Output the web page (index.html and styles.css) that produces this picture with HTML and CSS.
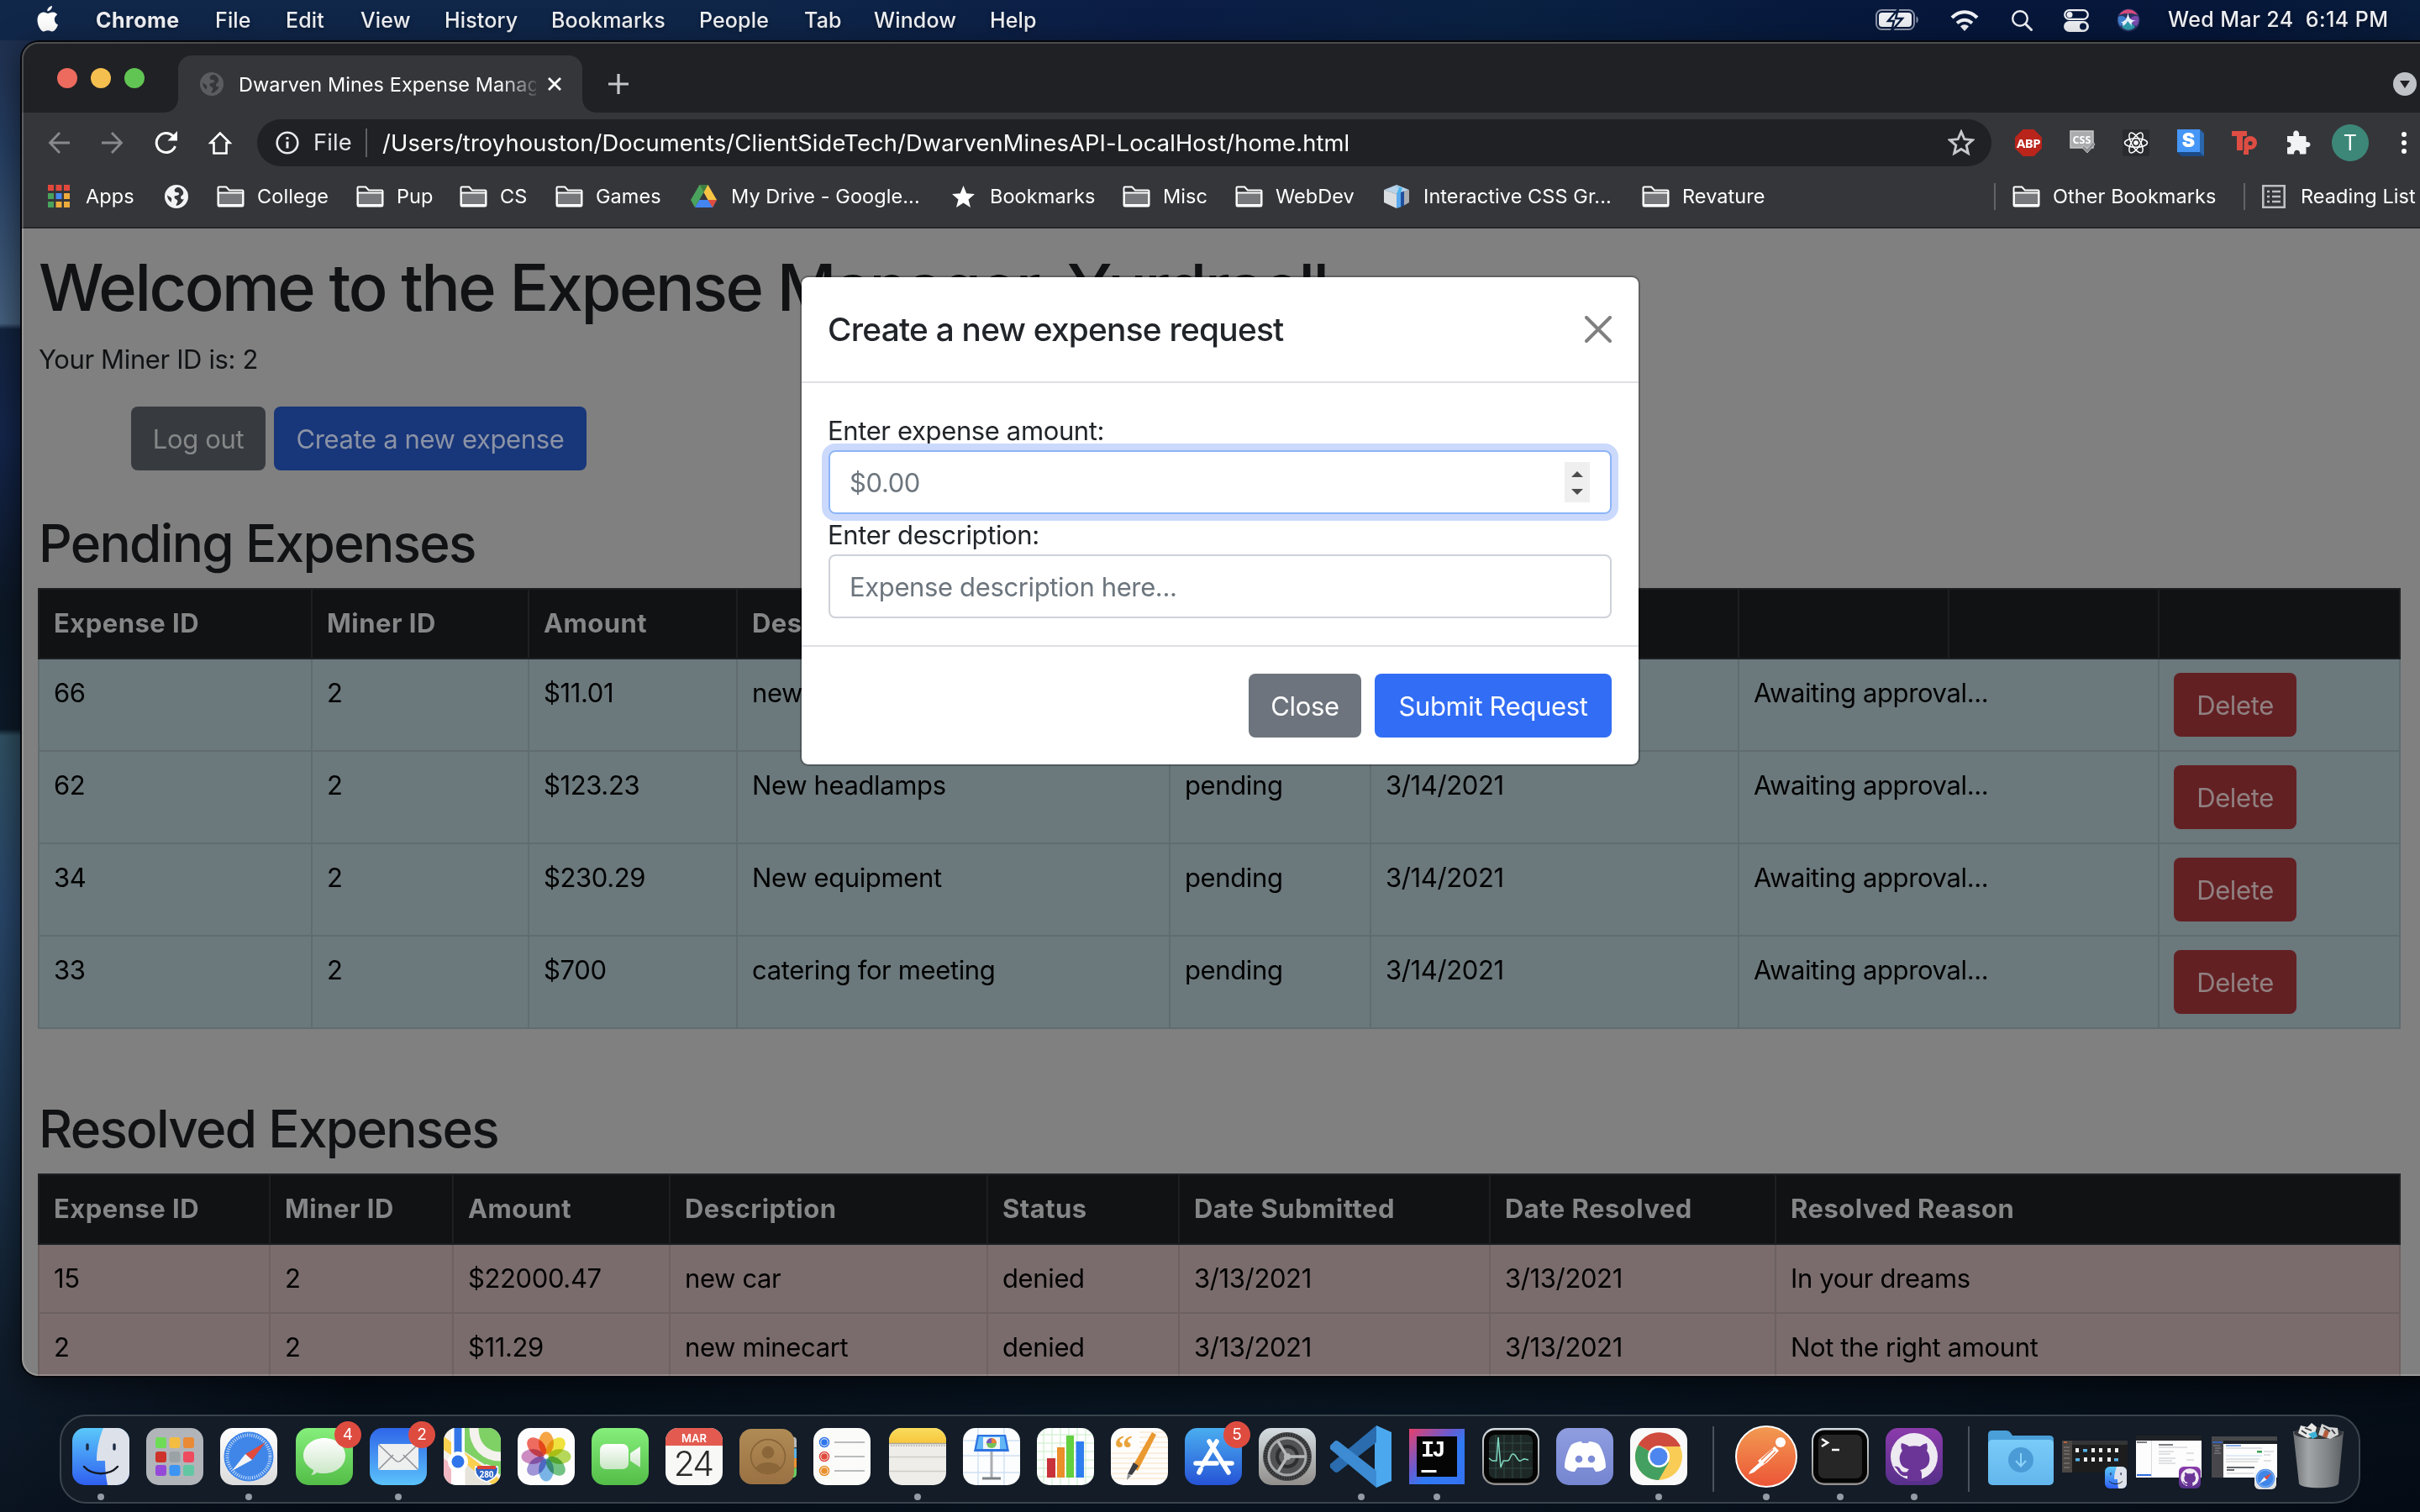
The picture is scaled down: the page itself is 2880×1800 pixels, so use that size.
FILE: index.html
```html
<!DOCTYPE html>
<html lang="en">
<head>
<meta charset="utf-8">
<title>Dwarven Mines Expense Manager</title>
<link rel="stylesheet" href="styles.css">
</head>
<body>
<svg class="defs" aria-hidden="true">
  <defs>
    <linearGradient id="gBlue" x1="0" y1="0" x2="0" y2="1"><stop offset="0" stop-color="#5ac8fa"/><stop offset="1" stop-color="#2f5ff0"/></linearGradient>
    <linearGradient id="gMail" x1="0" y1="0" x2="0" y2="1"><stop offset="0" stop-color="#2f66e9"/><stop offset="1" stop-color="#5bc2fb"/></linearGradient>
    <linearGradient id="gStore" x1="0" y1="0" x2="0" y2="1"><stop offset="0" stop-color="#4aaef0"/><stop offset="1" stop-color="#2653d6"/></linearGradient>
    <linearGradient id="gGreen" x1="0" y1="0" x2="0" y2="1"><stop offset="0" stop-color="#86ef7c"/><stop offset="1" stop-color="#53bd48"/></linearGradient>
    <linearGradient id="gGrey" x1="0" y1="0" x2="0" y2="1"><stop offset="0" stop-color="#d5dde2"/><stop offset="1" stop-color="#918e8b"/></linearGradient>
    <linearGradient id="gWhite" x1="0" y1="0" x2="0" y2="1"><stop offset="0" stop-color="#ffffff"/><stop offset="1" stop-color="#dcdcdc"/></linearGradient>
    <linearGradient id="gPurple" x1="0" y1="0" x2="0" y2="1"><stop offset="0" stop-color="#8b3bab"/><stop offset="1" stop-color="#56308a"/></linearGradient>
    <linearGradient id="gDisc" x1="0" y1="0" x2="0" y2="1"><stop offset="0" stop-color="#8f9de0"/><stop offset="1" stop-color="#7585d0"/></linearGradient>
    <linearGradient id="gPost" x1="0" y1="0" x2="0" y2="1"><stop offset="0" stop-color="#f29a52"/><stop offset="1" stop-color="#ec5536"/></linearGradient>
    <linearGradient id="gWood" x1="0" y1="0" x2="0" y2="1"><stop offset="0" stop-color="#b08b55"/><stop offset="1" stop-color="#9a7143"/></linearGradient>
    <linearGradient id="gIj" x1="0" y1="0" x2="1" y2="1"><stop offset="0" stop-color="#e8406a"/><stop offset=".4" stop-color="#6a5bd0"/><stop offset=".6" stop-color="#2f7af5"/><stop offset="1" stop-color="#3572f2"/></linearGradient>
    <linearGradient id="gTrash" x1="0" y1="0" x2="1" y2="0"><stop offset="0" stop-color="#6d7073"/><stop offset=".3" stop-color="#a3a6a8"/><stop offset=".7" stop-color="#808386"/><stop offset="1" stop-color="#5d6063"/></linearGradient>
    <linearGradient id="gFold" x1="0" y1="0" x2="0" y2="1"><stop offset="0" stop-color="#79cbf8"/><stop offset="1" stop-color="#62b6ec"/></linearGradient>
    <linearGradient id="gYellow" x1="0" y1="0" x2="0" y2="1"><stop offset="0" stop-color="#fadc5e"/><stop offset="1" stop-color="#f7c63c"/></linearGradient>
    <linearGradient id="gBubble" x1="0" y1="0" x2="0" y2="1"><stop offset="0" stop-color="#ffffff"/><stop offset="1" stop-color="#c9e6c5"/></linearGradient>
    <radialGradient id="gSiri"><stop offset="0" stop-color="#e8f4ff"/><stop offset=".3" stop-color="#5f8fd8"/><stop offset=".7" stop-color="#7c3d8c"/><stop offset="1" stop-color="#26365e"/></radialGradient>
    <clipPath id="tile"><rect width="68" height="68" rx="15"/></clipPath>

    <symbol id="i-folder" viewBox="0 0 33 26"><path d="M1.500 23V2.800C1.500 1.900 2 1.500 2.800 1.500h8.400l3.600 4h15.400c.9 0 1.300.5 1.300 1.300V23c0 .9-.5 1.500-1.300 1.500H2.800c-.8 0-1.300-.6-1.300-1.500z" fill="#35363a" stroke="#fff" stroke-width="2"/><path d="M2 8.500h29V23H2z" fill="#77787b" stroke="#fff" stroke-width="1.800"/></symbol>
    <symbol id="i-globe" viewBox="0 0 28 28"><circle cx="14" cy="14" r="14" fill="currentColor"/><path d="M15 3c-3 1-4 3-3 5 2 2 4 0 5 2s-2 3-4 3-2 3 0 4 3 2 2 4-2 3-1 4c4-1 7-4 9-8-2 1-4 0-4-2s2-2 3-4c1-3-1-5-3-7-1-1-2-1-4-1zM3 12c1 2 4 2 5 4s-1 3 0 5c-3-2-5-5-5-9z" fill="var(--hole)"/></symbol>
    <symbol id="s-finder" viewBox="0 0 68 68"><g clip-path="url(#tile)"><path d="M0 0h68v68H0z" fill="url(#gBlue)"/><path d="M37 0c-5 12-8 25-8 39h10c0 10 1 20 3 29h26V0z" fill="#dde1ea"/><path d="M18 20v5M50 20v5" stroke="#1c2b45" stroke-width="3.400" stroke-linecap="round"/><path d="M14 46c10 11 30 11 40 0" fill="none" stroke="#14181f" stroke-width="2.400" stroke-linecap="round"/></g></symbol>
    <symbol id="s-safari" viewBox="0 0 68 68"><rect width="68" height="68" rx="15" fill="url(#gWhite)"/><circle cx="34" cy="34" r="29.500" fill="#3f86e8"/><circle cx="34" cy="34" r="25.500" fill="none" stroke="#cfe2fb" stroke-width="4" stroke-dasharray="1 1.670"/><path d="M54 17L38 38l-8-7z" fill="#e14a3c"/><path d="M14 51l16-20 8 7z" fill="#f2f4f6"/></symbol>
    <symbol id="s-github" viewBox="0 0 68 68"><rect width="68" height="68" rx="15" fill="url(#gPurple)"/><circle cx="34" cy="34" r="28" fill="#eeeaf2"/><path d="M19 18c5 1 8 3 9 4 4-1 9-1 13 0 2-2 5-3 8-4 1 4 1 7 0 9 3 4 4 8 3 13-1 6-6 9-11 10 2 2 2 4 2 6v7H26v-6c-8 1-10-4-12-7-1-2-2-3-4-4 5-1 7 2 8 4 2 3 5 3 8 2 0-1 1-2 2-3-6-1-10-4-11-10-1-4 0-8 3-12-2-3-2-6-1-9z" fill="#6b3598"/></symbol>
  </defs>
</svg>

<header class="menubar">
  <svg class="apple" viewBox="0 0 26 32"><path d="M18 1c.3 3-2.700 6.500-5.700 6.300C12 4.300 15 1.300 18 1zM25 23.500C23.500 27.500 21 31.500 18 31.500c-2 0-2.500-1.200-5-1.200s-3.200 1.200-5 1.200C4.500 31.500.5 24 .5 18 .5 12 4 8.500 8 8.500c2 0 3.800 1.400 5 1.400s3.300-1.600 6-1.400c2.200.1 4 1.100 5.200 2.900-5 3-4 9.900.8 12.100z" fill="#fff"/></svg>
  <nav class="menus">
    <b>Chrome</b><span>File</span><span>Edit</span><span>View</span><span>History</span><span>Bookmarks</span><span>People</span><span>Tab</span><span>Window</span><span>Help</span>
  </nav>
  <div class="status">
    <svg width="52" height="26" viewBox="0 0 52 26"><rect x="1" y="1" width="45" height="23" rx="6.500" fill="none" stroke="#8b93a8" stroke-width="2"/><path d="M48.500 8.500c3 1 3 7 0 8z" fill="#8b93a8"/><rect x="4" y="4" width="39" height="17" rx="4" fill="#eef0f4"/><path d="M27 0L15 14h7l-3 12 13-15h-8z" fill="#eef0f4" stroke="#0a1d40" stroke-width="2.400"/></svg>
    <svg width="34" height="25" viewBox="0 0 34 25"><path d="M2 9c9-9 21-9 30 0" fill="none" stroke="#eef0f4" stroke-width="4.200"/><path d="M8 15.500c6-5 12-5 18 0" fill="none" stroke="#eef0f4" stroke-width="4"/><path d="M12 19.500c3-3 7-3 10 0l-5 5.500z" fill="#eef0f4"/></svg>
    <svg width="25" height="25" viewBox="0 0 25 25"><circle cx="10" cy="10" r="8.800" fill="none" stroke="#eef0f4" stroke-width="2.400"/><path d="M16.500 16.500l7 7" stroke="#eef0f4" stroke-width="3" stroke-linecap="round"/></svg>
    <svg width="30" height="27" viewBox="0 0 30 27"><rect x="1.200" y="1.200" width="27.600" height="10.600" rx="5.300" fill="none" stroke="#eef0f4" stroke-width="2.200"/><circle cx="7" cy="6.500" r="3.500" fill="#eef0f4"/><rect y="14" width="30" height="13" rx="6.500" fill="#eef0f4"/><circle cx="23" cy="20.500" r="4" fill="#0a1d40"/></svg>
    <svg width="28" height="28" viewBox="0 0 28 28"><circle cx="14" cy="14" r="13.500" fill="#2b3566"/><path d="M3 8C8-1 20-1 25 8c-7-3-15-3-22 0z" fill="#d94a7c"/><path d="M2 10c4-2 8-1 11 4-4 5-7 7-9 7-2-3-3-7-2-11z" fill="#3d7fd0"/><path d="M26 10c-4-2-8-1-11 4 3 5 7 7 9 7 2-3 3-7 2-11z" fill="#7a4bb0"/><path d="M6 22c3-4 6-6 8-8 3 3 6 5 8 8-5 5-11 5-16 0z" fill="#2e9fb0"/><path d="M3.500 17c6-1 9-4 10-12 1 8 4 10 11 9-6 1-8 3-6.500 8-2-4-4-6-5-7-1 2-3 5-6 6 1-4-1-5-3.500-4z" fill="#e9f6ff"/></svg>
    <span class="clock">Wed Mar 24&nbsp; 6:14 PM</span>
  </div>
</header>

<main class="window">
  <div class="tabstrip">
    <div class="lights"><i class="red"></i><i class="amber"></i><i class="green"></i></div>
    <div class="tab">
      <svg class="favicon" viewBox="0 0 28 28"><use href="#i-globe"/></svg>
      <span class="tab-title">Dwarven Mines Expense Manag</span>
      <svg class="tab-close" viewBox="0 0 18 18"><path d="M2 2l14 14M16 2L2 16" stroke="#fff" stroke-width="2.800"/></svg>
    </div>
    <svg class="newtab" viewBox="0 0 24 24"><path d="M12 0v24M0 12h24" stroke="#c4c7c9" stroke-width="3.200"/></svg>
    <svg class="tabsearch" viewBox="0 0 28 28"><circle cx="14" cy="14" r="14" fill="#bfc2c7"/><path d="M8 10h12l-6 9z" fill="#202124"/></svg>
  </div>

  <div class="toolbar">
    <svg class="nav" viewBox="0 0 26 26"><path d="M14 1L2.500 13 14 25M2 13h24" fill="none" stroke="#88898c" stroke-width="2.800"/></svg>
    <svg class="nav" viewBox="0 0 26 26"><path d="M12 1l11.500 12L12 25M24 13H0" fill="none" stroke="#88898c" stroke-width="2.800"/></svg>
    <svg class="nav reload" viewBox="0 0 28 28"><path d="M24.500 18A11.500 11.500 0 1 1 22 6" fill="none" stroke="#fff" stroke-width="3"/><path d="M27 0v11.500H15.500z" fill="#fff"/></svg>
    <svg class="nav home" viewBox="0 0 28 28"><path d="M14 2.500L2.500 14H6.500v12.500h15V14h4z" fill="none" stroke="#fff" stroke-width="2.600"/></svg>
    <div class="omnibox">
      <svg class="info" viewBox="0 0 28 28"><circle cx="14" cy="14" r="12.300" fill="none" stroke="#e8eaed" stroke-width="2.600"/><path d="M14 12.500v8M14 7v3" stroke="#e8eaed" stroke-width="3"/></svg>
      <span class="scheme">File</span>
      <span class="url">/Users/troyhouston/Documents/ClientSideTech/DwarvenMinesAPI-LocalHost/home.html</span>
      <svg class="star" viewBox="0 0 28 28"><path d="M14 2.500l3.400 7.800 8.400.8-6.400 5.600 1.900 8.300L14 20.600 6.700 25l1.900-8.300-6.400-5.600 8.400-.8z" fill="none" stroke="#c6c8cb" stroke-width="2.500"/></svg>
    </div>
    <div class="extensions">
      <svg width="32" height="32" viewBox="0 0 32 32"><path d="M9.500 0h13L32 9.500v13L22.500 32h-13L0 22.500v-13z" fill="#b9241b"/><text x="16" y="21.500" class="t-abp" text-anchor="middle">ABP</text></svg>
      <svg width="32" height="32" viewBox="0 0 32 32"><path d="M2 2h27v20H2z" fill="#a9abad" stroke="#c9c9c9" stroke-width="1.500"/><text x="15.500" y="17" class="t-css" text-anchor="middle">CSS</text><path d="M17 19l5 4 7-8 2 3-9 10-6-6z" fill="#8c8f91" stroke="#cfcfcf" stroke-width=".8"/></svg>
      <svg width="32" height="32" viewBox="0 0 32 32"><rect width="32" height="32" rx="3" fill="#2a2b2e"/><g fill="none" stroke="#fff" stroke-width="1.500"><ellipse cx="16" cy="16" rx="13.500" ry="5.200"/><ellipse cx="16" cy="16" rx="13.500" ry="5.200" transform="rotate(60 16 16)"/><ellipse cx="16" cy="16" rx="13.500" ry="5.200" transform="rotate(120 16 16)"/></g><circle cx="16" cy="16" r="2.800" fill="#fff"/></svg>
      <svg width="32" height="32" viewBox="0 0 32 32"><path d="M27 0l5 5v27H5l-5-5z" fill="#1b4a87"/><path d="M27 0l5 5v27l-5-5z" fill="#2a66ac"/><path d="M0 0h27v27H0z" fill="#4596f7"/><text x="13.500" y="21" class="t-s" text-anchor="middle">S</text></svg>
      <svg width="32" height="32" viewBox="0 0 32 32"><path d="M1 2h18v6h-5v17H7V8H1z" fill="#de4d43"/><path d="M15 30V16a8 8 0 1 1 8 8h-2v6z" fill="#de4d43"/><path d="M15 8v18" stroke="#35363a" stroke-width="1"/><circle cx="23" cy="16.500" r="2.600" fill="#35363a"/></svg>
      <svg width="32" height="32" viewBox="0 0 32 32"><path d="M3 8h7.500C9.500 4 11 1.500 13.500 1.500S17.800 4 17 8h7c1 0 1.500.5 1.500 1.500v5.500c3-.5 5 .8 5 3s-2 3.600-5 3V28c0 1-.5 1.500-1.500 1.500h-6c.3-3-1-4.800-3.500-4.800S11 26.500 11 29.500H4.500C3.500 29.500 3 29 3 28v-6.500c3 .2 4.500-1 4.500-3.300S6 15 3 15z" fill="#f1f3f4"/></svg>
    </div>
    <span class="avatar">T</span>
    <svg class="kebab" width="8" height="28" viewBox="0 0 8 28"><circle cx="4" cy="4" r="3" fill="#fff"/><circle cx="4" cy="14" r="3" fill="#fff"/><circle cx="4" cy="24" r="3" fill="#fff"/></svg>
  </div>

  <nav class="bookmarks">
    <span class="bm"><svg width="26" height="27" viewBox="0 0 26 27"><path d="M0 0h7v7H0zM9.500 0h7v7h-7zM19 0h7v7h-7z" fill="#e2473b"/><path d="M0 10h7v7H0zM0 20h7v7H0z" fill="#4aa35c"/><path d="M9.500 10h7v7h-7z" fill="#4687f1"/><path d="M19 10h7v7h-7zM9.500 20h7v7h-7zM19 20h7v7h-7z" fill="#edab3c"/></svg>Apps</span>
    <span class="bm"><svg class="white-globe" width="28" height="28"><use href="#i-globe"/></svg></span>
    <span class="bm"><svg width="33" height="26"><use href="#i-folder"/></svg>College</span>
    <span class="bm"><svg width="33" height="26"><use href="#i-folder"/></svg>Pup</span>
    <span class="bm"><svg width="33" height="26"><use href="#i-folder"/></svg>CS</span>
    <span class="bm"><svg width="33" height="26"><use href="#i-folder"/></svg>Games</span>
    <span class="bm"><svg width="31" height="27" viewBox="0 0 31 27"><path d="M10.500 0L0 18l5 9 10.500-18z" fill="#4aa35c"/><path d="M10.500 0h10L31 18H20.500z" fill="#f7c544"/><path d="M10.300 18H31l-5 9H5z" fill="#4485ef"/><path d="M20.500 18H31l-5 9z" fill="#df4d3e"/><path d="M10.500 0h10l-5 9z" fill="#3c7d42"/></svg>My Drive - Google...</span>
    <span class="bm"><svg width="27" height="26" viewBox="0 0 27 26"><path d="M13.500 0l3.700 9.300 9.800.7-7.500 6.400L22 26l-8.500-5.400L5 26l2.500-9.600L0 10l9.800-.7z" fill="#fff"/></svg>Bookmarks</span>
    <span class="bm"><svg width="33" height="26"><use href="#i-folder"/></svg>Misc</span>
    <span class="bm"><svg width="33" height="26"><use href="#i-folder"/></svg>WebDev</span>
    <span class="bm"><svg width="30" height="28" viewBox="0 0 30 28"><path d="M0 6l15-6 15 6-15 5z" fill="#b9d3e8"/><path d="M0 6l15 5v17L0 21z" fill="#d9dde0"/><path d="M15 11l6-2v17l-6 2z" fill="#5aa9ee"/><path d="M20 9l4-1.500v17L20 26z" fill="#1f4f9c"/><path d="M24 7.500L30 6v15l-6 3.500z" fill="#a9adb2"/><path d="M12 1.500l6 2-3 7.500 5-1.500 2-6z" fill="#49b5ee"/></svg>Interactive CSS Gr...</span>
    <span class="bm"><svg width="33" height="26"><use href="#i-folder"/></svg>Revature</span>
    <span class="rule"></span>
    <span class="bm"><svg width="33" height="26"><use href="#i-folder"/></svg>Other Bookmarks</span>
    <span class="rule"></span>
    <span class="bm reading"><svg width="28" height="28" viewBox="0 0 28 28"><path d="M1.300 1.300h25.400v25.400H1.300z" fill="none" stroke="#bdbfc1" stroke-width="2.600"/><path d="M6 8h3M6 14h3M6 20h3M12 8h10M12 14h10M12 20h10" stroke="#bdbfc1" stroke-width="2.600"/></svg>Reading List</span>
  </nav>

  <section class="page">
    <h1>Welcome to the Expense Manager, Yurdraell</h1>
    <p>Your Miner ID is: 2</p>
    <div class="actions"><span class="btn grey">Log out</span><span class="btn blue">Create a new expense</span></div>

    <h2>Pending Expenses</h2>
    <table class="pending">
      <colgroup><col class="p1"><col class="p2"><col class="p3"><col class="p4"><col class="p5"><col class="p6"><col class="p7"><col class="p8"><col class="p9"></colgroup>
      <thead><tr><th>Expense ID</th><th>Miner ID</th><th>Amount</th><th>Description</th><th></th><th></th><th></th><th></th><th></th></tr></thead>
      <tbody>
        <tr><td>66</td><td>2</td><td>$11.01</td><td>new</td><td></td><td></td><td colspan="2">Awaiting approval...</td><td><span class="btn red">Delete</span></td></tr>
        <tr><td>62</td><td>2</td><td>$123.23</td><td>New headlamps</td><td>pending</td><td>3/14/2021</td><td colspan="2">Awaiting approval...</td><td><span class="btn red">Delete</span></td></tr>
        <tr><td>34</td><td>2</td><td>$230.29</td><td>New equipment</td><td>pending</td><td>3/14/2021</td><td colspan="2">Awaiting approval...</td><td><span class="btn red">Delete</span></td></tr>
        <tr><td>33</td><td>2</td><td>$700</td><td>catering for meeting</td><td>pending</td><td>3/14/2021</td><td colspan="2">Awaiting approval...</td><td><span class="btn red">Delete</span></td></tr>
      </tbody>
    </table>

    <h2>Resolved Expenses</h2>
    <table class="resolved">
      <colgroup><col class="r1"><col class="r2"><col class="r3"><col class="r4"><col class="r5"><col class="r6"><col class="r7"><col class="r8"></colgroup>
      <thead><tr><th>Expense ID</th><th>Miner ID</th><th>Amount</th><th>Description</th><th>Status</th><th>Date Submitted</th><th>Date Resolved</th><th>Resolved Reason</th></tr></thead>
      <tbody>
        <tr><td>15</td><td>2</td><td>$22000.47</td><td>new car</td><td>denied</td><td>3/13/2021</td><td>3/13/2021</td><td>In your dreams</td></tr>
        <tr><td>2</td><td>2</td><td>$11.29</td><td>new minecart</td><td>denied</td><td>3/13/2021</td><td>3/13/2021</td><td>Not the right amount</td></tr>
      </tbody>
    </table>

    <div class="modal">
      <div class="modal-header"><h5>Create a new expense request</h5><svg width="32" height="32" viewBox="0 0 32 32"><path d="M2 2l28 28M30 2L2 30" stroke="#808080" stroke-width="4" stroke-linecap="round"/></svg></div>
      <div class="modal-body">
        <span class="label">Enter expense amount:</span>
        <div class="field focus">$0.00<svg width="30" height="48" viewBox="0 0 30 48"><path d="M0 0h30v48H0z" fill="#efefef"/><path d="M8 18l7-7 7 7zM8 32l7 7 7-7z" fill="#4d4d4d"/></svg></div>
        <span class="label">Enter description:</span>
        <div class="field">Expense description here...</div>
      </div>
      <div class="modal-footer"><span class="btn close">Close</span><span class="btn submit">Submit Request</span></div>
    </div>
  </section>
</main>

<footer class="dock">
  <div class="app on"><svg viewBox="0 0 68 68"><use href="#s-finder"/></svg></div>
  <div class="app"><svg viewBox="0 0 68 68"><rect width="68" height="68" rx="15" fill="#b1b5ba"/><rect x="11" y="11" width="13" height="13" rx="3" fill="#6fdc57"/><rect x="27.500" y="11" width="13" height="13" rx="3" fill="#f3bd42"/><rect x="44" y="11" width="13" height="13" rx="3" fill="#e98a36"/><rect x="11" y="28" width="13" height="13" rx="3" fill="#cd3328"/><rect x="27.500" y="28" width="13" height="13" rx="3" fill="#9aa2a6"/><rect x="44" y="28" width="13" height="13" rx="3" fill="#ef4b5f"/><rect x="11" y="44" width="13" height="13" rx="3" fill="#9549d8"/><rect x="27.500" y="44" width="13" height="13" rx="3" fill="#3d94f2"/><rect x="44" y="44" width="13" height="13" rx="3" fill="#62c6a3"/></svg></div>
  <div class="app on"><svg viewBox="0 0 68 68"><use href="#s-safari"/></svg></div>
  <div class="app nudge"><svg viewBox="0 0 68 68"><rect width="68" height="68" rx="15" fill="url(#gGreen)"/><path d="M34 12c14 0 25 9 25 21s-11 21-25 21c-3 0-6 0-9-1-2 2-4 3-7 3 2-2 3-4 3-6-7-4-12-10-12-17 0-12 11-21 25-21z" fill="url(#gBubble)"/></svg><em>4</em></div>
  <div class="app on"><svg viewBox="0 0 68 68"><rect width="68" height="68" rx="15" fill="url(#gMail)"/><rect x="10" y="19" width="48" height="31" rx="3" fill="#eeefef"/><path d="M11 49l17-17M57 49L40 32M11 20l19 18c3 3 5 3 8 0l19-18" fill="none" stroke="#8f9499" stroke-width="1.600"/></svg><em>2</em></div>
  <div class="app"><svg viewBox="0 0 68 68"><g clip-path="url(#tile)"><path d="M0 0h68v68H0z" fill="#f4f1ea"/><path d="M22 0h46v56L22 26z" fill="#7fd166"/><path d="M36 0c0 22 14 34 32 34" fill="none" stroke="#f4f2ec" stroke-width="11"/><path d="M0 10l68 52v12L0 26z" fill="#fbd04e"/><path d="M26 42l30 26H26z" fill="#e6e3da"/><path d="M0 36l10 8v24H0z" fill="#f1b8c4"/><path d="M9 0h16v68H9z" fill="#fff"/><path d="M12.500 0h9v40h-9z" fill="#3477e8"/><circle cx="17" cy="40" r="12" fill="#fff"/><circle cx="17" cy="40" r="7.500" fill="#2f74ea"/><path d="M38 46c4 1 8 0 13-2 5 2 9 3 13 2 2 8-1 14-13 18-12-4-15-10-13-18z" fill="#2b62c6" stroke="#fff" stroke-width="1.500"/><path d="M40 45h22v4H40z" fill="#d84438"/><text x="51" y="58.500" class="t-280" text-anchor="middle">280</text></g></svg></div>
  <div class="app"><svg viewBox="0 0 68 68"><rect width="68" height="68" rx="15" fill="#fdfdfd"/><g class="petals"><ellipse cx="34" cy="18" rx="9" ry="13.500" fill="#f5a545"/><ellipse cx="34" cy="18" rx="9" ry="13.500" fill="#efe23e" transform="rotate(45 34 34)"/><ellipse cx="34" cy="18" rx="9" ry="13.500" fill="#b5d85a" transform="rotate(90 34 34)"/><ellipse cx="34" cy="18" rx="9" ry="13.500" fill="#72c283" transform="rotate(135 34 34)"/><ellipse cx="34" cy="18" rx="9" ry="13.500" fill="#7ab4e6" transform="rotate(180 34 34)"/><ellipse cx="34" cy="18" rx="9" ry="13.500" fill="#a095d6" transform="rotate(225 34 34)"/><ellipse cx="34" cy="18" rx="9" ry="13.500" fill="#cc8cc2" transform="rotate(270 34 34)"/><ellipse cx="34" cy="18" rx="9" ry="13.500" fill="#ee6b5f" transform="rotate(315 34 34)"/></g></svg></div>
  <div class="app"><svg viewBox="0 0 68 68"><rect width="68" height="68" rx="15" fill="url(#gGreen)"/><rect x="10" y="19" width="34" height="30" rx="7" fill="url(#gBubble)"/><path d="M46 30l12-8c0 8 0 16 0 25l-12-8z" fill="url(#gBubble)"/></svg></div>
  <div class="app"><svg viewBox="0 0 68 68"><g clip-path="url(#tile)"><path d="M0 0h68v68H0z" fill="#f8f8f7"/><path d="M0 0h68v21H0z" fill="#e35b50"/></g><text x="34" y="16.500" class="t-mar" text-anchor="middle">MAR</text><text x="33" y="57" class="t-24" text-anchor="middle">24</text></svg></div>
  <div class="app"><svg viewBox="0 0 70 68"><path d="M60 10h7q3 1 3 4v9H60z" fill="#b9bcbd"/><path d="M60 24h10v12H60z" fill="#59b4ea"/><path d="M60 36h10v12H60z" fill="#ef9330"/><path d="M60 48h10v6q0 5-4 6h-6z" fill="#68cf63"/><rect width="67" height="68" rx="15" fill="url(#gWood)"/><circle cx="35" cy="34" r="21" fill="none" stroke="#866336" stroke-width="1.600"/><circle cx="35" cy="29" r="7.500" fill="#8a6638"/><path d="M20 48c4-9 26-9 30 0-7 8-23 8-30 0z" fill="#8a6638"/></svg></div>
  <div class="app"><svg viewBox="0 0 68 68"><rect width="68" height="68" rx="15" fill="#fbfbfa"/><g fill="none" stroke-width="1.500"><circle cx="13" cy="17" r="5.500" stroke="#2f74ea"/><circle cx="13" cy="34" r="5.500" stroke="#df4a3d"/><circle cx="13" cy="51" r="5.500" stroke="#e98f2b"/></g><circle cx="13" cy="17" r="3.800" fill="#2f74ea"/><circle cx="13" cy="34" r="3.800" fill="#df4a3d"/><circle cx="13" cy="51" r="3.800" fill="#e98f2b"/><path d="M25 17h36M25 34h36M25 51h36" stroke="#babcbd" stroke-width="1.800"/></svg></div>
  <div class="app nudge on"><svg viewBox="0 0 68 68"><g clip-path="url(#tile)"><path d="M0 0h68v68H0z" fill="#eeede9"/><path d="M0 0h68v18H0z" fill="url(#gYellow)"/><path d="M0 18.500h68" stroke="#a9a59a" stroke-width="1.500"/><path d="M2 21h66" stroke="#bbb8b0" stroke-width="2" stroke-dasharray="1.500 1.500"/><path d="M0 34.500h68M0 51.500h68" stroke="#cfcdc8" stroke-width="1.500"/></g></svg></div>
  <div class="app"><svg viewBox="0 0 68 68"><g clip-path="url(#tile)"><path d="M0 0h68v68H0z" fill="#fcfdfe"/><path d="M0 15h68M0 33h68M0 53h68M18 0v68M49 0v68" stroke="#cfe0f4" stroke-width="1.400"/><path d="M17 8h34l4 20H13z" fill="#2f74e2"/><path d="M19 10h30l3 15H16z" fill="#62b6f5"/><rect x="24" y="11" width="20" height="14" fill="#f3f6f8"/><circle cx="34" cy="18" r="6" fill="#75c158"/><path d="M34 18v-6a6 6 0 0 1 6 6z" fill="#ef7d3a"/><path d="M34 18h-6a6 6 0 0 1 6-6z" fill="#7b55c0"/><path d="M34 28v31" stroke="#a9adb1" stroke-width="3"/><path d="M23 60h22" stroke="#7d8185" stroke-width="3"/></g></svg></div>
  <div class="app"><svg viewBox="0 0 68 68"><g clip-path="url(#tile)"><path d="M0 0h68v68H0z" fill="#fdfefd"/><path d="M0 8h68M0 18h68M0 28h68M0 38h68M0 48h68M0 58h68M8 0v68M18 0v68M28 0v68M38 0v68M48 0v68M58 0v68" stroke="#c9ecc8"/><path d="M12 36h10v23H12z" fill="#c9323a"/><path d="M24 23h9v36h-9z" fill="#ea8f2a"/><path d="M35 9h9v50h-9z" fill="#62d03f"/><path d="M46.500 16H56v43h-9.500z" fill="#2f7ef0"/></g></svg></div>
  <div class="app"><svg viewBox="0 0 68 68"><g clip-path="url(#tile)"><path d="M0 0h68v68H0z" fill="#fefdfb"/><path d="M34 5h34M34 11h34M34 17h34M34 23h34M0 30h68M0 36h68M0 42h68M0 48h68M0 54h68M0 60h68" stroke="#f8e0c2"/></g><text x="4" y="39" class="t-quote">“</text><path d="M49 5l5 3-22 43-7-4z" fill="#ea9930"/><path d="M27 41l6 4-8 11-5-1z" fill="#3d3f42"/><path d="M20 55l4 2-5 5z" fill="#8a8d90"/></svg></div>
  <div class="app"><svg viewBox="0 0 68 68"><rect width="68" height="68" rx="15" fill="url(#gStore)"/><path d="M38 16L21 44M29 16l23 37M13 42h25M46 42h10M19 49l-2 4" stroke="#fff" stroke-width="5.500" stroke-linecap="round"/></svg><em>5</em></div>
  <div class="app"><svg viewBox="0 0 68 68"><rect width="68" height="68" rx="15" fill="url(#gGrey)"/><circle cx="34" cy="34" r="29" fill="#4a4b4d"/><circle cx="34" cy="34" r="26" fill="none" stroke="#2a2b2c" stroke-width="4" stroke-dasharray="1.500 1.500"/><circle cx="34" cy="34" r="22" fill="#515254" stroke="#a6a9aa" stroke-width="3"/><circle cx="34" cy="34" r="12" fill="#606163" stroke="#2e2f30" stroke-width="4"/><path d="M34 34h21M34 34L23 16M34 34L23 52" stroke="#b5b8b9" stroke-width="3.400"/><circle cx="34" cy="34" r="4" fill="#b5b8b9"/></svg></div>
  <div class="app wide on"><svg viewBox="0 0 74 74"><path d="M55 0l18 8v58l-18 8-2-16V16z" fill="#4ba8ee"/><path d="M55 0v20L10 55c-2 1.500-4 1-5 0l-5-5c-1-1-1-3 0-4z" fill="#2a6cae"/><path d="M55 74V54L10 19c-2-1.500-4-1-5 0l-5 5c-1 1-1 3 0 4z" fill="#3d8bd2"/></svg></div>
  <div class="app nudge on"><svg viewBox="0 0 68 68"><path d="M1 1h66v66H1z" fill="url(#gIj)"/><path d="M10 10h48v48H10z" fill="#050505"/><text x="15" y="34" class="t-ij">IJ</text><path d="M15.500 50h18v3h-18z" fill="#fff"/></svg></div>
  <div class="app"><svg viewBox="0 0 68 68"><rect width="68" height="68" rx="15" fill="url(#gGrey)"/><rect x="2" y="2.500" width="64" height="63" rx="13" fill="#050505"/><rect x="8" y="8" width="52" height="52" rx="7" fill="#1d2826"/><path d="M16 8v52M26 8v52M36 8v52M46 8v52M8 18h52M8 28h52M8 48h52" stroke="#35524c" stroke-width=".8"/><path d="M8 36l4 3h5l2-28 3 36 3-8h5c4 0 3-9 7-8s4 7 7 8 4-3 7-2l4 1" fill="none" stroke="#7fd6c0" stroke-width="1.500"/></svg></div>
  <div class="app"><svg viewBox="0 0 68 68"><rect width="68" height="68" rx="15" fill="url(#gDisc)"/><path d="M18 20c5-3 9-4 12-4l1 2h7l1-2c4 0 8 1 12 4 5 8 8 18 8 27-4 4-8 5-12 5l-3-5H25l-3 5c-4 0-9-1-12-5 0-9 3-19 8-27z" fill="#fff"/><circle cx="27" cy="37" r="4.300" fill="#7c8cd6"/><circle cx="42" cy="37" r="4.300" fill="#7c8cd6"/></svg></div>
  <div class="app on"><svg viewBox="0 0 68 68"><rect width="68" height="68" rx="15" fill="#f9f9f9"/><circle cx="34" cy="34" r="28" fill="#f9cc55"/><path d="M34 34L9.750 20A28 28 0 0 0 34 62l12-21z" fill="#43a060"/><path d="M34 34h0L9.750 20A28 28 0 0 1 60 22H34z" fill="#cf4b3e"/><circle cx="34" cy="34" r="13" fill="#fff"/><circle cx="34" cy="34" r="10.500" fill="#4d86ee"/></svg></div>
  <span class="divider"></span>
  <div class="app wide on"><svg viewBox="0 0 74 74"><circle cx="37" cy="37" r="36" fill="url(#gPost)" stroke="#fff" stroke-width="2"/><circle cx="54" cy="20" r="6" fill="#fff"/><path d="M47 25l5 5-14 14-6 4-5-6z" fill="#fff"/><path d="M29 44l4 3-11 9-6 2 2-4z" fill="#fff"/><path d="M31 41l14-13M34 45l14-14" stroke="#ee7442" stroke-width="1.200"/></svg></div>
  <div class="app on"><svg viewBox="0 0 68 68"><rect width="68" height="68" rx="15" fill="url(#gGrey)"/><rect x="2" y="2.500" width="64" height="63" rx="13" fill="#050505"/><rect x="8" y="8" width="52" height="52" rx="7" fill="#262626"/><path d="M12 13l7 4.500-7 4.500M24 26h9" fill="none" stroke="#fff" stroke-width="2.600"/></svg></div>
  <div class="app on"><svg viewBox="0 0 68 68"><use href="#s-github"/></svg></div>
  <span class="divider"></span>
  <div class="downloads"><svg viewBox="0 0 78 66"><path d="M0 6q0-5 5-5h17q3 0 5 3l2 3h44q5 0 5 5v10H0z" fill="#4a9fd8"/><rect y="12" width="78" height="54" rx="5" fill="url(#gFold)"/><circle cx="39" cy="36" r="15" fill="#4a9bd6"/><path d="M39 28v15M33 37l6 6.500 6-6.500" fill="none" stroke="#8dd4fa" stroke-width="2"/></svg></div>
  <div class="thumb t1"><svg viewBox="0 0 78 38"><path d="M0 0h78v38H0z" fill="#1d1d1e"/><path d="M0 0h12v38H0z" fill="#4a4744"/><path d="M12 0h66v5H12z" fill="#333436"/><path d="M2 2h4" stroke="#d8713c" stroke-width="1.500"/><path d="M16 9h4v5h-4zM35 9h4v5h-4zM44 9h4v5h-4zM54 9h4v5h-4zM63 9h4v5h-4zM26 20h4v5h-4zM35 20h4v5h-4zM44 20h4v5h-4zM54 20h4v5h-4z" fill="#f2f2f2"/><path d="M25 10h5v3.500h-5zM16 21h5v3.500h-5zM62 21h5v3.500h-5z" fill="#5ab3e8"/><path d="M2 8h7M2 12h7M2 16h7M2 21h7M2 27h7M2 32h7" stroke="#8b8783"/></svg><svg class="mini" viewBox="0 0 68 68"><use href="#s-finder"/></svg></div>
  <div class="thumb t2"><svg viewBox="0 0 78 50"><path d="M0 0h78v50H0z" fill="#fdfdfd"/><path d="M0 0h78v6H0z" fill="#1f2226"/><path d="M18.500 6v44" stroke="#d9dbdd"/><path d="M1 47h17" stroke="#2f6be0" stroke-width="2"/><path d="M27 11h17M1 8h12" stroke="#4e5358" stroke-width="1.500"/><path d="M27 14h34M27 19h18M27 22h14M27 27h20M27 30h16M27 33h20M60 21h9M60 29h9" stroke="#c2c5c8"/></svg><svg class="mini" viewBox="0 0 68 68"><use href="#s-github"/></svg></div>
  <div class="thumb t3"><svg viewBox="0 0 78 49"><path d="M0 0h78v49H0z" fill="#fdfdfd"/><path d="M0 0h78v5H0z" fill="#47484a"/><path d="M14 5h64v4H14z" fill="#1d2228"/><path d="M0 5h14v44H0z" fill="#47474b"/><path d="M1 7h12" stroke="#2f6be0" stroke-width="1.500"/><path d="M2 11h8M4 14h7M4 17h5M3 20h8" stroke="#8b8b90"/><path d="M54 17h6v2.500h-6z" fill="#3ba055"/><path d="M17 11h18" stroke="#3b78d8" stroke-width="1.200"/><path d="M17 22h43v2H17z" fill="#dfeaf7"/><path d="M17 14h43M17 27h40M17 30h38M62 18h12M62 22h8M62 29h9M18 44h32" stroke="#c2c5c8"/><path d="M18 37h33M18 40h9" stroke="#33383e" stroke-width="1.700"/></svg><svg class="mini" viewBox="0 0 68 68"><use href="#s-safari"/></svg></div>
  <div class="trash"><svg viewBox="0 0 60 78"><path d="M0 10h60l-6 62c-1 7-46 7-47 0z" fill="url(#gTrash)"/><ellipse cx="30" cy="12" rx="29" ry="7" fill="#34383c"/><path d="M6 12l3-9 8 2 5-5 6 5-3 11-8 2z" fill="#e8e8e6"/><path d="M30 14l4-13 9 4 10 1 1 8-10 5z" fill="#d5d6d5"/><path d="M18 13l9-3 2 6-6 3z" fill="#3fb2d8"/><path d="M38 8l5 2-3 8-5-2z" fill="#b25a3a"/><path d="M14 6l8 3M36 5l8 5M46 8l4 5M10 9l6 4" stroke="#33373b" stroke-width="1.800"/></svg></div>
</footer>
</body>
</html>
```
FILE: styles.css
```css
* { box-sizing: border-box; }
body {
  margin: 0; width: 2880px; height: 1800px; overflow: hidden;
  display: flex; flex-direction: column; align-items: flex-start;
  font-family: Inter, "Liberation Sans", sans-serif; color: #000;
  background:
    radial-gradient(1500px 260px at 1500px 1720px, rgba(14, 36, 54, .45), transparent),
    linear-gradient(90deg, transparent 0, rgba(0, 4, 10, .72) 420px, rgba(0, 4, 10, .6) 100%),
    linear-gradient(180deg, #1f3050 48px, #263f63 180px, #46617f 385px, #132440 392px, #14264c 520px, #0d1826 720px, #0c1a28 868px, #305163 876px, #29476b 1080px, #1f3852 1300px, #101d2c 1600px, #0a1320 1800px);
}
.defs { position: absolute; width: 0; height: 0; }
svg { display: block; flex: none; }

/* menu bar */
.menubar {
  width: 100%; height: 48px; flex: none; display: flex; align-items: center; padding-left: 44px;
  background: linear-gradient(90deg, #11274a 0, #0f2649 30%, #0b1d45 48%, #0a2142 62%, #06173b 80%, #06173a 92%, #091d3c);
  color: #f0f1f4; font-size: 25px; font-weight: 500; letter-spacing: .006em; text-shadow: 0 2px 5px rgba(0, 0, 0, .4);
}
.apple { width: 26px; height: 32px; margin: -4px 44px 0 0; }
.menus { display: grid; grid-template-columns: 142px 84px 89px 100px 127px 176px 125px 83px 138px 60px; margin-top: -1px; }
.menus b { letter-spacing: .02em; }
.status { display: flex; align-items: center; margin-left: auto; padding-right: 34px; }
.status svg:nth-child(1) { margin-right: 37px; }
.status svg:nth-child(2) { margin-right: 39px; }
.status svg:nth-child(3) { margin-right: 37px; }
.status svg:nth-child(4) { margin-right: 33px; }
.status svg:nth-child(5) { margin-right: 33px; }
.clock { letter-spacing: .017em; width: 266px; white-space: nowrap; margin-top: -3px; }

/* browser window */
.window {
  position: relative; flex: none; width: 2874px; height: 1588px; margin: 2px 0 0 26px; overflow: hidden;
  border-radius: 20px; box-shadow: 0 0 0 2px #05070b, 0 10px 40px rgba(0, 0, 0, .6); background: #808080;
}
.window::after { content: ""; position: absolute; inset: 0; border-radius: 20px; box-shadow: inset 0 0 0 2px rgba(255, 255, 255, .2); }
.tabstrip { height: 84px; background: #202124; display: flex; align-items: flex-start; padding-left: 42px; }
.lights { display: flex; gap: 16px; margin-top: 31px; }
.lights i { width: 24px; height: 24px; border-radius: 50%; }
.lights .red { background: #ed6a5e; }
.lights .amber { background: #f5bf4f; }
.lights .green { background: #61c554; }
.tab {
  position: relative; width: 481px; height: 68px; margin: 16px 0 0 40px; padding: 0 24px 0 26px; border-radius: 16px 16px 0 0;
  background: #35363a; color: #fff; display: flex; align-items: center; font-size: 23.500px; letter-spacing: .002em;
}
.tab::before, .tab::after { content: ""; position: absolute; bottom: 0; width: 16px; height: 16px; }
.tab::before { left: -16px; background: radial-gradient(circle at 0 0, transparent 15.500px, #35363a 16px); }
.tab::after { right: -16px; background: radial-gradient(circle at 100% 0, transparent 15.500px, #35363a 16px); }
.favicon { width: 28px; height: 28px; color: #5b5c60; --hole: #35363a; margin-right: 18px; }
.tab-title { width: 354px; white-space: nowrap; -webkit-mask: linear-gradient(90deg, #000 310px, transparent 362px); mask: linear-gradient(90deg, #000 310px, transparent 362px); }
.tab-close { width: 18px; height: 18px; margin-left: 13px; }
.newtab { width: 24px; height: 24px; margin: 38px 0 0 31px; }
.tabsearch { width: 28px; height: 28px; margin: 36px 24px 0 auto; }

.toolbar { height: 72px; background: #35363a; display: flex; align-items: center; padding-left: 31px; }
.nav { width: 26px; height: 26px; margin-right: 37.500px; }
.nav.reload { width: 28px; height: 28px; margin-right: 36px; }
.nav.home { width: 28px; height: 28px; margin-right: 30px; }
.omnibox { width: 2064px; height: 56px; border-radius: 28px; background: #202124; display: flex; align-items: center; padding: 0 22px; font-size: 27.300px; letter-spacing: .0045em; color: #fff; }
.info { width: 28px; height: 28px; margin-right: 17px; }
.scheme { color: #e1e3e6; width: 64px; height: 34px; line-height: 34px; border-right: 2px solid #5f6165; margin-right: 18px; }
.star { width: 32px; height: 32px; margin-left: auto; margin-right: -2px; }
.extensions { display: flex; gap: 32.200px; margin-left: 28px; }
.avatar { width: 44px; height: 44px; border-radius: 50%; background: #3d8779; color: #fff; font-size: 25px; line-height: 44px; text-align: center; margin-left: 24px; }
.kebab { margin-left: 38px; }
.t-abp { font: 700 15px "Noto Sans", sans-serif; fill: #fff; letter-spacing: -.5px; }
.t-css { font: 700 12.500px "Noto Sans", sans-serif; fill: #fff; }
.t-s { font: 900 23px Inter, sans-serif; fill: #fff; }

.bookmarks { height: 66px; background: #35363a; border-bottom: 2px solid #242528; padding: 0 0 9px 31px; display: flex; align-items: center; color: #fff; font-size: 23.500px; letter-spacing: .003em; white-space: nowrap; }
.bm { display: flex; align-items: center; gap: 15px; }
.bm:nth-child(1) { width: 139px; gap: 19px; }
.bm:nth-child(2) { width: 62px; }
.bm:nth-child(3) { width: 166px; }
.bm:nth-child(4) { width: 123px; }
.bm:nth-child(5) { width: 114px; }
.bm:nth-child(6) { width: 161px; }
.bm:nth-child(7) { width: 311px; gap: 17px; }
.bm:nth-child(8) { width: 203px; gap: 18px; }
.bm:nth-child(9) { width: 134px; }
.bm:nth-child(10) { width: 177px; }
.bm:nth-child(11) { width: 307px; gap: 17px; }
.bm:nth-child(12) { width: 419px; }
.bm:nth-child(14) { width: 275px; }
.bm.reading { gap: 18px; }
.rule { width: 2px; height: 32px; background: #626367; margin-right: 20px; }
.white-globe { color: #f1f3f4; --hole: #35363a; }

/* page behind the dialog backdrop */
.page { padding: 20px 0 0 20px; font-size: 31px; line-height: 48px; letter-spacing: -.012em; }
h1 { margin: 0 0 16px; padding-top: 4px; font-size: 77.500px; font-weight: 500; line-height: 92px; letter-spacing: -.032em; color: #101214; white-space: nowrap; }
.page p { margin: 0 0 32px; color: #101214; }
.actions { display: flex; gap: 10px; padding-left: 110px; margin-bottom: 48px; }
.btn { display: block; height: 76px; padding: 15px 0 13px; border-radius: 8px; text-align: center; white-space: nowrap; }
.btn.grey { width: 160px; background: #373b3f; color: #868788; }
.btn.blue { width: 372px; background: #18367a; color: #8b93a5; }
.btn.red { width: 146px; background: #632023; color: #908081; }
h2 { margin: 0 0 16px; padding-top: 2px; font-size: 62px; font-weight: 500; line-height: 74px; letter-spacing: -.027em; color: #101214; }
table { width: 2810px; margin-left: -1px; table-layout: fixed; border-collapse: collapse; }
th, td { border: 2px solid; padding: 16px 16px 16px 17px; text-align: left; vertical-align: top; white-space: nowrap; }
th { height: 83px; background: #101214; border-color: #1d1f21; color: #858686; font-weight: 700; letter-spacing: .015em; }
.pending { margin-bottom: 80px; }
.pending td { height: 110px; background: #6b787c; border-color: #606c70; }
.resolved td { height: 82px; background: #7a6c6c; border-color: #6e6161; }
.p1 { width: 325px; } .p2 { width: 258px; } .p3 { width: 248px; } .p4 { width: 515px; } .p5 { width: 239px; }
.p6 { width: 438px; } .p7, .p8 { width: 250px; } .p9 { width: 287px; }
.r1 { width: 275px; } .r2 { width: 218px; } .r3 { width: 258px; } .r4 { width: 378px; } .r5 { width: 228px; }
.r6 { width: 370px; } .r7 { width: 340px; } .r8 { width: 743px; }

/* dialog */
.modal { position: absolute; left: 926px; top: 278px; width: 1000px; height: 584px; border: 2px solid rgba(0, 0, 0, .25); border-radius: 10px; background: #fff; background-clip: padding-box; color: #212529; }
.modal-header { height: 126px; padding: 32px 32px 32px 31px; display: flex; justify-content: space-between; align-items: center; border-bottom: 2px solid #dee0e6; }
h5 { margin: 0; font-size: 38.800px; font-weight: 500; line-height: 60px; letter-spacing: -.019em; }
.modal-body { padding: 32px; height: 312px; }
.label { display: block; height: 48px; line-height: 50px; margin-left: -1px; }
.field { height: 76px; border: 2px solid #ced2d9; border-radius: 8px; padding: 12px 24px 12px 23px; line-height: 49px; color: #6c757d; display: flex; justify-content: space-between; }
.focus { position: relative; border-color: #8cb4f8; box-shadow: 0 0 0 8px #cbd9fc; }
.modal-footer { height: 142px; padding: 32px; border-top: 2px solid #dee0e6; display: flex; justify-content: flex-end; gap: 16px; color: #fff; }
.btn.close { width: 134px; background: #6d747d; }
.btn.submit { width: 282px; background: #326df5; }

/* dock */
.dock { position: relative; flex: none; display: flex; align-items: flex-start; gap: 20px; width: 2738px; height: 106px; margin: 46px 0 0 71px; padding: 14px 0 0 13px; border: 2px solid #3a444d; border-radius: 32px; background: #131c27; }
.app { position: relative; width: 68px; height: 68px; }
.app > svg { width: 100%; height: 100%; }
.nudge { margin-left: 2px; }
.app.wide > svg { width: 74px; height: 74px; margin: -3px; }
.app.on::after { content: ""; position: absolute; left: 30px; top: 78px; width: 8px; height: 8px; border-radius: 50%; background: #939ba5; }
.app em { position: absolute; right: -10px; top: -8px; width: 32px; height: 32px; border-radius: 50%; background: #de4c40; color: #fff; font: 400 19px/32px Inter, sans-serif; text-align: center; }
.divider { width: 2px; height: 78px; margin: -2px 8px 0 10px; background: #4b545d; }
.downloads { width: 78px; height: 66px; margin: 2px -10px 0 -6px; }
.thumb { position: relative; width: 78px; }
.t1 { margin-top: 15px; }
.t2 { margin: 9px 0 0 -10px; }
.t3 { margin: 10px 0 0 -8px; }
.mini { position: absolute; width: 26px; height: 26px; right: 1px; }
.t1 .mini { top: 31px; }
.t2 .mini, .t3 .mini { top: 37px; }
.trash { width: 60px; height: 78px; margin: -6px 0 0 -1px; }
.t-280 { font: 700 10px "Open Sans", sans-serif; fill: #fff; }
.t-mar { font: 600 13px Inter, sans-serif; fill: #fff; }
.t-24 { font: 300 41px Inter, sans-serif; fill: #2a2a2a; letter-spacing: -2px; }
.t-quote { font: 700 44px "Liberation Serif", serif; fill: #e9a33c; }
.t-ij { font: 700 27px "Liberation Mono", monospace; fill: #fff; letter-spacing: -3px; }
.petals { isolation: isolate; }
.petals ellipse { mix-blend-mode: multiply; }
```
